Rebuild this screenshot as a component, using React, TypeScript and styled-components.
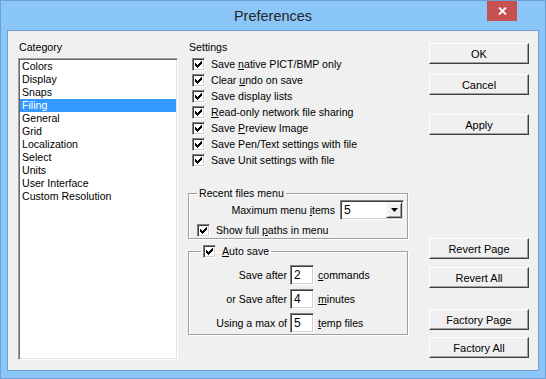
import React from "react";
import styled, { createGlobalStyle } from "styled-components";

const GlobalStyle = createGlobalStyle`
    html, body {
        margin: 0;
        padding: 0;
        background: #ffffff;
    }
    body {
        font-family: "Liberation Sans", Arial, sans-serif;
        font-size: 10.6px;
        color: #000;
    }
`;

const categories = [
    "Colors",
    "Display",
    "Snaps",
    "Filing",
    "General",
    "Grid",
    "Localization",
    "Select",
    "Units",
    "User Interface",
    "Custom Resolution",
];

const settings: React.ReactNode[] = [
    <>Save <u>n</u>ative PICT/BMP only</>,
    <>Clear <u>u</u>ndo on save</>,
    <>Save display lists</>,
    <><u>R</u>ead-only network file sharing</>,
    <>Save <u>P</u>review Image</>,
    <>Save Pen/Text settings with file</>,
    <>Save Unit settings with file</>,
];

function CheckMark() {
    return (
        <svg width="7" height="7" viewBox="0 0 7 7" shapeRendering="crispEdges">
            <polygon points="0,2 2,4 7,-1 7,2 2,7 0,5" fill="#000" />
        </svg>
    );
}

function Check({ children }: { children?: React.ReactNode }) {
    return (
        <CheckRow>
            <CheckBox>
                <CheckMark />
            </CheckBox>
            {children && <span>{children}</span>}
        </CheckRow>
    );
}

export default function App() {
    // [label, gap above]
    const buttons: [string, number][] = [
        ["OK", 2],
        ["Cancel", 10],
        ["Apply", 19],
        ["Revert Page", 103],
        ["Revert All", 8],
        ["Factory Page", 21],
        ["Factory All", 7],
    ];

    return (
        <>
            <GlobalStyle />
            <Window>
                <TitleBar>
                    <Title>Preferences</Title>
                    <CloseBtn>
                        <svg width="9" height="8" viewBox="0 0 9 8">
                            <path
                                d="M1 0.5 L8 7.5 M8 0.5 L1 7.5"
                                stroke="#fff"
                                strokeWidth="1.8"
                            />
                        </svg>
                    </CloseBtn>
                </TitleBar>
                <Client>
                    <CategoryCol>
                        <Label>Category</Label>
                        <ListBox>
                            {categories.map((c) => (
                                <ListItem key={c} $selected={c === "Filing"}>
                                    {c}
                                </ListItem>
                            ))}
                        </ListBox>
                    </CategoryCol>

                    <SettingsCol>
                        <Label>Settings</Label>
                        <CheckList>
                            {settings.map((s, i) => (
                                <Check key={i}>{s}</Check>
                            ))}
                        </CheckList>

                        <Group $mt={19}>
                            <Legend $ml={8}>Recent files menu</Legend>
                            <MenuRow>
                                <span>
                                    Maximum menu <u>i</u>tems
                                </span>
                                <Select>
                                    <SelectValue>5</SelectValue>
                                    <DropBtn>
                                        <svg width="7" height="4" viewBox="0 0 7 4">
                                            <polygon points="0,0 7,0 3.5,4" fill="#000" />
                                        </svg>
                                    </DropBtn>
                                </Select>
                            </MenuRow>
                            <PathsRow>
                                <Check>
                                    Show full <u>p</u>aths in menu
                                </Check>
                            </PathsRow>
                        </Group>

                        <Group $mt={4}>
                            <Legend $ml={12}>
                                <Check>
                                    <u>A</u>uto save
                                </Check>
                            </Legend>
                            <AutoRows>
                                <AutoRow>
                                    <RowLabel>Save after</RowLabel>
                                    <NumInput>2</NumInput>
                                    <span>
                                        <u>c</u>ommands
                                    </span>
                                </AutoRow>
                                <AutoRow>
                                    <RowLabel>or Save after</RowLabel>
                                    <NumInput>4</NumInput>
                                    <span>
                                        <u>m</u>inutes
                                    </span>
                                </AutoRow>
                                <AutoRow>
                                    <RowLabel>Using a max of</RowLabel>
                                    <NumInput>5</NumInput>
                                    <span>
                                        <u>t</u>emp files
                                    </span>
                                </AutoRow>
                            </AutoRows>
                        </Group>
                    </SettingsCol>

                    <ButtonCol>
                        {buttons.map(([b, mt]) => (
                            <Button key={b} $mt={mt}>
                                {b}
                            </Button>
                        ))}
                    </ButtonCol>
                </Client>
            </Window>
        </>
    );
}

const Window = styled.div`
    width: 546px;
    height: 379px;
    box-sizing: border-box;
    border: 1px solid #6c9fd6;
    background-color: #8bc6f8;
    display: flex;
    flex-direction: column;
`;

const TitleBar = styled.div`
    position: relative;
    height: 29px;
    flex-shrink: 0;
    display: flex;
    align-items: center;
    justify-content: center;
`;

const Title = styled.div`
    font-family: "Liberation Sans", Arial, sans-serif;
    font-size: 14.5px;
    color: #262626;
    margin-top: 1px;
`;

const CloseBtn = styled.div`
    position: absolute;
    top: 0;
    right: 28px;
    width: 30px;
    height: 20px;
    background-color: #c75050;
    display: flex;
    align-items: center;
    justify-content: center;
`;

const Client = styled.div`
    flex: 1;
    margin: 0 6px 7px 6px;
    border: 1px solid #6f9fd3;
    background-color: #f0f0f0;
    display: flex;
    padding: 10px 0 0 10px;
`;

const Label = styled.div`
    height: 13px;
    line-height: 13px;
    padding-left: 1px;
`;

const CategoryCol = styled.div`
    width: 160px;
    display: flex;
    flex-direction: column;
`;

const ListBox = styled.div`
    margin-top: 4px;
    width: 160px;
    height: 302px;
    box-sizing: border-box;
    background: #fff;
    border: 1px solid;
    border-color: #a0a0a0 #ffffff #ffffff #a0a0a0;
    box-shadow: inset 1px 1px 0 #696969, inset -1px -1px 0 #e3e3e3;
    padding: 1px;
`;

const ListItem = styled.div<{ $selected?: boolean }>`
    height: 13px;
    line-height: 13px;
    padding-left: 2px;
    white-space: nowrap;
    background-color: ${(p) => (p.$selected ? "#3399ff" : "transparent")};
    color: ${(p) => (p.$selected ? "#fff" : "#000")};
`;

const SettingsCol = styled.div`
    width: 220px;
    margin-left: 10px;
    display: flex;
    flex-direction: column;
`;

const CheckList = styled.div`
    margin-top: 2px;
    padding-left: 4px;
    display: flex;
    flex-direction: column;
`;

const CheckRow = styled.div`
    height: 16px;
    display: flex;
    align-items: center;
    gap: 6px;
    white-space: nowrap;
`;

const CheckBox = styled.span`
    width: 13px;
    height: 13px;
    box-sizing: border-box;
    flex-shrink: 0;
    background: #fff;
    border: 1px solid;
    border-color: #808080 #ffffff #ffffff #808080;
    box-shadow: inset 1px 1px 0 #404040, inset -1px -1px 0 #d4d0c8;
    display: flex;
    align-items: center;
    justify-content: center;
`;

const Group = styled.fieldset<{ $mt: number }>`
    margin: ${(p) => p.$mt}px 0 0 0;
    padding: 0;
    min-width: 0;
    width: 220px;
    box-sizing: border-box;
    border: 1px solid #a0a0a0;
    box-shadow: inset 1px 1px 0 #fff, 1px 1px 0 #fff;
`;

const Legend = styled.legend<{ $ml: number }>`
    margin-left: ${(p) => p.$ml}px;
    padding: 0 2px;
    line-height: 13px;
`;

const MenuRow = styled.div`
    height: 20px;
    display: flex;
    align-items: center;
    justify-content: flex-end;
    gap: 5px;
    padding-right: 3px;
`;

const Select = styled.div`
    width: 64px;
    height: 20px;
    box-sizing: border-box;
    background: #fff;
    border: 1px solid;
    border-color: #808080 #ffffff #ffffff #808080;
    box-shadow: inset 1px 1px 0 #404040, inset -1px -1px 0 #d4d0c8;
    padding: 1px;
    display: flex;
    align-items: stretch;
`;

const SelectValue = styled.div`
    flex: 1;
    padding-left: 2px;
    font-size: 12px;
    display: flex;
    align-items: center;
`;

const DropBtn = styled.div`
    width: 16px;
    box-sizing: border-box;
    background: #f0f0f0;
    border: 1px solid;
    border-color: #f0f0f0 #404040 #404040 #f0f0f0;
    box-shadow: inset 1px 1px 0 #fff, inset -1px -1px 0 #a0a0a0;
    display: flex;
    align-items: center;
    justify-content: center;
`;

const PathsRow = styled.div`
    margin-top: 2px;
    padding-left: 8px;
`;

const AutoRows = styled.div`
    padding: 6px 0 1px 0;
    display: flex;
    flex-direction: column;
    gap: 4px;
`;

const AutoRow = styled.div`
    height: 20px;
    display: grid;
    grid-template-columns: 98px 24px auto;
    column-gap: 3px;
    align-items: center;
    & > span:last-child {
        margin-left: 1px;
    }
`;

const RowLabel = styled.span`
    text-align: right;
    white-space: nowrap;
`;

const NumInput = styled.div`
    width: 24px;
    height: 20px;
    box-sizing: border-box;
    background: #fff;
    border: 1px solid;
    border-color: #808080 #ffffff #ffffff #808080;
    box-shadow: inset 1px 1px 0 #404040, inset -1px -1px 0 #d4d0c8;
    padding-left: 3px;
    font-size: 12px;
    line-height: 18px;
`;

const ButtonCol = styled.div`
    margin-left: 21px;
    width: 100px;
    display: flex;
    flex-direction: column;
`;

const Button = styled.div<{ $mt: number }>`
    margin-top: ${(p) => p.$mt}px;
    width: 100px;
    height: 21px;
    box-sizing: border-box;
    background: #f0f0f0;
    border: 1px solid;
    border-color: #ffffff #404040 #404040 #ffffff;
    box-shadow: inset -1px -1px 0 #a0a0a0;
    display: flex;
    align-items: center;
    justify-content: center;
    white-space: nowrap;
    font-size: 11px;
`;
